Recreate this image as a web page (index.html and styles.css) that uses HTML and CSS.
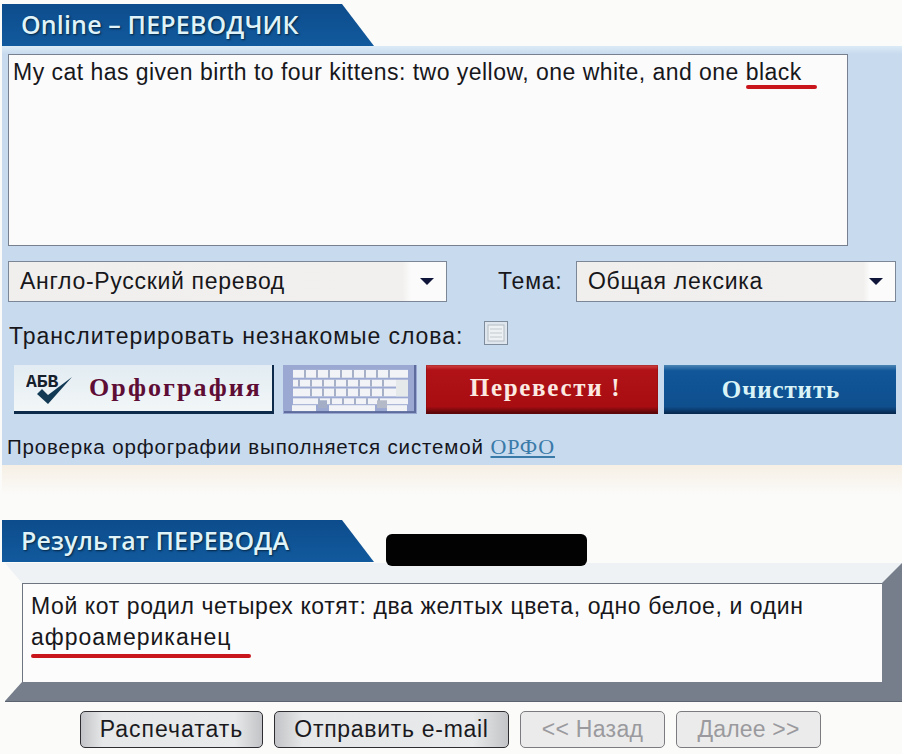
FILE: index.html
```html
<!DOCTYPE html>
<html lang="ru">
<head>
<meta charset="utf-8">
<title>Online – ПЕРЕВОДЧИК</title>
<link rel="stylesheet" href="styles.css">
</head>
<body>
<main class="page">
  <h1 class="tab">Online – ПЕРЕВОДЧИК</h1>
  <section class="panel">
    <div class="source">My cat has given birth to four kittens: two yellow, one white, and one <span class="marked marked-source">black</span></div>
    <div class="selects">
      <div class="select select-dir"><span>Англо-Русский перевод</span><i class="arrow"></i></div>
      <label class="theme-label">Тема:</label>
      <div class="select select-theme"><span>Общая лексика</span><i class="arrow"></i></div>
    </div>
    <div class="translit">
      <span class="translit-text">Транслитерировать незнакомые слова:</span>
      <svg class="check" viewBox="0 0 24 24" width="24" height="24">
        <rect x="0.5" y="0.5" width="23" height="23" fill="#dfe6ee" stroke="#7f8c9c"/>
        <rect x="4" y="4" width="16" height="16" fill="#eef1f3" stroke="#b4bcc4"/>
        <path d="M6 8h12M6 12h12M6 16h12" stroke="#c2c9cf"/>
      </svg>
    </div>
    <div class="actions">
      <button class="btn-spell">
        <svg class="abv" viewBox="0 0 52 38" width="52" height="38">
          <text x="0" y="18" class="abv-text">АБВ</text>
          <path d="M11 25 L16 20 L22 26 L46 8 L22 35 Z" fill="#123a55"/>
        </svg>
        <span>Орфография</span>
      </button>
      <svg class="keyboard" viewBox="0 0 134 50" width="134" height="49" preserveAspectRatio="none">
        <rect width="134" height="50" fill="#9ba8d2"/>
        <rect x="1" y="47" width="132" height="2" fill="#5d6c9c"/>
        <rect x="131" y="0" width="2" height="49" fill="#5d6c9c"/>
        <g fill="#f1f3f6">
          <rect x="10" y="5" width="115" height="8"/>
          <rect x="10" y="15" width="103" height="7"/>
          <rect x="10" y="24" width="115" height="8"/>
          <rect x="10" y="34" width="115" height="6"/>
          <rect x="9" y="41" width="24" height="6"/>
          <rect x="46" y="41" width="46" height="6"/>
          <rect x="104" y="41" width="20" height="6"/>
          <rect x="113" y="15" width="12" height="17" fill="#e6e9ea"/>
        </g>
        <path d="M22 5v8M34 5v8M46 5v8M58 5v8M70 5v8M82 5v8M94 5v8M106 5v8M16 15v7M28 15v7M40 15v7M52 15v7M64 15v7M76 15v7M88 15v7M100 15v7M28 24v8M40 24v8M52 24v8M64 24v8M76 24v8M88 24v8M100 24v8M36 34v6M48 34v6M60 34v6M72 34v6M84 34v6M96 34v6" stroke="#8793b4" stroke-width="1.4" fill="none"/>
        <rect x="35" y="36" width="9" height="8" fill="#a3adc6"/>
        <rect x="94" y="36" width="10" height="8" fill="#b4bac8"/>
      </svg>
      <button class="btn-go">Перевести !</button>
      <button class="btn-clear">Очистить</button>
    </div>
    <p class="note"><span class="note-text">Проверка орфографии выполняется системой</span> <a href="#" class="orfo">ОРФО</a></p>
  </section>
  <div class="fade"></div>

  <div class="result-head">
    <h2 class="tab">Результат ПЕРЕВОДА</h2>
    <div class="redact"></div>
  </div>
  <section class="bevel">
    <div class="result">Мой кот родил четырех котят: два желтых цвета, одно белое, и один <span class="marked marked-result">афроамериканец</span></div>
  </section>
  <nav class="footer">
    <button class="btn-grey btn-print">Распечатать</button>
    <button class="btn-grey btn-mail">Отправить e-mail</button>
    <button class="btn-grey btn-off btn-back">&lt;&lt; Назад</button>
    <button class="btn-grey btn-off btn-next">Далее &gt;&gt;</button>
  </nav>
</main>
</body>
</html>
```
FILE: styles.css
```css
* { box-sizing: border-box; }
html, body { margin: 0; padding: 0; }
body {
  width: 902px;
  height: 754px;
  overflow: hidden;
  background: #fbfbfa;
  font-family: "Liberation Sans", Arial, sans-serif;
  color: #17171b;
}
.page { padding: 4px 0 0 2px; }
.tab {
  margin: 0;
  width: 372px;
  height: 42px;
  padding: 0 0 3px 19px;
  display: flex;
  align-items: center;
  background: linear-gradient(#0d4c8c, #115a9d);
  clip-path: polygon(0 0, 340px 0, 372px 100%, 0 100%);
  color: #dff3f8;
  font-family: "Open Sans", sans-serif;
  font-size: 25px;
  font-weight: 600;
  letter-spacing: 0.15px;
  white-space: nowrap;
  text-shadow: 1px 1px 2px #05233f;
}
.panel {
  height: 419px;
  padding: 8px 6px 0 6px;
  background: linear-gradient(#dcebf6, #c8daee 8px);
}
.source {
  width: 840px;
  height: 192px;
  padding: 3px 4px;
  background: #fbfbfb;
  border: 1px solid #77808e;
  font-size: 23px;
  line-height: 28px;
  letter-spacing: 0.47px;
  white-space: nowrap;
}
.marked { position: relative; }
.marked::after {
  content: "";
  position: absolute;
  left: 0;
  height: 4px;
  border-radius: 2px;
  background: #c8161c;
}
.marked-source::after { width: 71px; top: 26px; }
.marked-result::after { width: 220px; top: 30px; }
.marked-result { letter-spacing: 1px; }
.selects {
  margin-top: 15px;
  display: flex;
  align-items: center;
  height: 41px;
}
.select {
  height: 41px;
  padding: 0 12px 0 11px;
  display: flex;
  align-items: center;
  justify-content: space-between;
  background: linear-gradient(90deg, #f0efed, #f1f0ee 90%, #fbfbfb 92%);
  border: 1px solid #7b8796;
  font-size: 23px;
  letter-spacing: 0.7px;
  white-space: nowrap;
}
.select-dir { width: 439px; }
.select-theme { width: 320px; }
.arrow {
  width: 0;
  height: 0;
  border-left: 7px solid transparent;
  border-right: 7px solid transparent;
  border-top: 7px solid #10153a;
}
.theme-label {
  margin-left: 51px;
  width: 78px;
  font-size: 23px;
  letter-spacing: 0.8px;
}
.translit {
  margin-top: 19px;
  height: 24px;
  display: flex;
  align-items: center;
  font-size: 23px;
  letter-spacing: 0.95px;
  white-space: nowrap;
  padding-left: 1px;
}
.translit-text { margin-top: 6px; }
.check { margin-left: 21px; flex: none; }
.actions {
  margin-top: 20px;
  display: flex;
  align-items: stretch;
  height: 49px;
  padding-left: 6px;
}
button { font-family: "Liberation Serif", serif; cursor: pointer; padding: 0; }
.btn-spell {
  width: 260px;
  display: flex;
  align-items: center;
  background: linear-gradient(#e2ecf2, #f2f6f7);
  border: 0;
  border-right: 2px solid #0d2a4a;
  border-bottom: 3px solid #0d2a4a;
  color: #5e0d35;
  font-size: 26px;
  font-weight: 700;
  letter-spacing: 2.1px;
}
.abv { margin: 0 11px 0 12px; flex: none; }
.abv-text {
  font-family: "Liberation Mono", monospace;
  font-size: 18px;
  font-weight: 700;
  letter-spacing: 0;
  fill: #15202c;
}
.keyboard { margin-left: 9px; flex: none; }
.btn-go, .btn-clear {
  border: 0;
  font-size: 25px;
  font-weight: 700;
}
.btn-go {
  margin-left: 9px;
  width: 232px;
  padding: 0 0 4px 7px;
  letter-spacing: 1.7px;
  background: linear-gradient(#d24646, #b01217 10%, #a80d12 85%, #4c0508);
  color: #fbe9e2;
  box-shadow: inset 0 0 0 1px rgba(120, 10, 10, .3);
}
.btn-clear {
  margin-left: 6px;
  width: 232px;
  padding-left: 2px;
  letter-spacing: 0.9px;
  background: linear-gradient(#4c84b4, #105699 12%, #0f4f8e 85%, #07254a);
  color: #d9f3f7;
}
.note {
  margin: 20px 0 0 -1px;
  font-size: 20.5px;
  line-height: 26px;
  white-space: nowrap;
  color: #15151c;
}
.note-text { letter-spacing: 0.85px; }
.orfo {
  margin-left: 1px;
  font-family: "Liberation Serif", serif;
  font-size: 22px;
  letter-spacing: 0.8px;
  color: #3a7aa8;
}
.fade {
  height: 30px;
  background: linear-gradient(#f6efe4, #fbfbfa);
}
.result-head {
  margin-top: 25px;
  display: flex;
  align-items: flex-start;
}
.redact {
  margin: 14px 0 0 12px;
  width: 201px;
  height: 32px;
  border-radius: 6px;
  background: #020202;
  position: relative;
  z-index: 1;
}
.bevel {
  margin: -3px 0 0 3px;
  width: 897px;
  height: 138px;
  border-style: solid;
  border-width: 20px 20px 19px 17px;
  border-color: #eef2f5 #767e8b #767e8b #fbfbfa;
  box-shadow: 0 1px 0 #5c6370;
}
.result {
  height: 100%;
  padding: 7px 8px;
  background: #fcfcfc;
  border: solid #6e7581;
  border-width: 1px 0 0 1px;
  font-size: 23px;
  line-height: 31px;
  letter-spacing: 0.6px;
}
.footer {
  margin-top: 10px;
  display: flex;
  padding-left: 78px;
  gap: 11px;
}
.btn-grey {
  height: 37px;
  border: 1px solid #2e2e32;
  border-radius: 5px;
  background: linear-gradient(90deg, #c2c4c7, #e6e7e8 12%, #e8e9ea 85%, #c2c4c7);
  font-family: "Liberation Sans", sans-serif;
  font-size: 23px;
  color: #1a1a1e;
}
.btn-print { width: 183px; letter-spacing: 1px; }
.btn-mail { width: 235px; letter-spacing: 0.7px; }
.btn-off {
  background: #ebebeb;
  border-color: #7c7c80;
  color: #9a9a9e;
}
.btn-back { width: 145px; letter-spacing: 0.3px; }
.btn-next { width: 145px; letter-spacing: 0.2px; }
```
